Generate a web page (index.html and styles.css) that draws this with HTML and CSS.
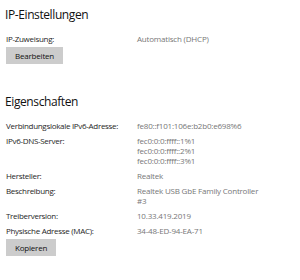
FILE: index.html
```
<!DOCTYPE html>
<html lang="de">
<head>
    <meta charset="UTF-8">
    <title>Netzwerkeigenschaften</title>
    <link rel="stylesheet" href="styles.css">
</head>
<body>

    <div class="section">
        <h2>IP-Einstellungen</h2>
        <div class="props">
            <div class="label">IP-Zuweisung:</div>
            <div class="value">Automatisch (DHCP)</div>
        </div>
        <button>Bearbeiten</button>
    </div>

    <div class="section second">
        <h2>Eigenschaften</h2>
        <div class="props">
            <div class="label">Verbindungslokale IPv6-Adresse:</div>
            <div class="value">fe80::f101:106e:b2b0:e698%6</div>

            <div class="label">IPv6-DNS-Server:</div>
            <div class="value">fec0:0:0:ffff::1%1<br>fec0:0:0:ffff::2%1<br>fec0:0:0:ffff::3%1</div>

            <div class="label">Hersteller:</div>
            <div class="value">Realtek</div>

            <div class="label">Beschreibung:</div>
            <div class="value">Realtek USB GbE Family Controller<br>#3</div>

            <div class="label">Treiberversion:</div>
            <div class="value">10.33.419.2019</div>

            <div class="label">Physische Adresse (MAC):</div>
            <div class="value">34-48-ED-94-EA-71</div>
        </div>
        <button>Kopieren</button>
    </div>

</body>
</html>
```

FILE: styles.css
```
/* Allgemeine Stile */
body {
    font-family: "Open Sans", "Noto Sans", sans-serif;
    background-color: #fff;
    margin: 0;
    padding: 7px 6px 0;
    color: #222;
}

.second {
    padding-top: 30px;
}

h2 {
    font-size: 12px;
    line-height: 16px;
    font-weight: 400;
    letter-spacing: -0.4px;
    margin: 0 0 11px -1px;
    color: #111;
}

.props {
    display: grid;
    grid-template-columns: 131px 1fr;
    row-gap: 5px;
    font-size: 8px;
    line-height: 10px;
}

.label {
    color: #262626;
    letter-spacing: -0.3px;
}

.value {
    color: #777;
    letter-spacing: -0.2px;
}

button {
    display: block;
    font-family: inherit;
    font-size: 8px;
    letter-spacing: -0.2px;
    color: #111;
    background-color: #ccc;
    border: none;
    padding: 0 9px;
    height: 17px;
    margin-top: 3px;
}
```
